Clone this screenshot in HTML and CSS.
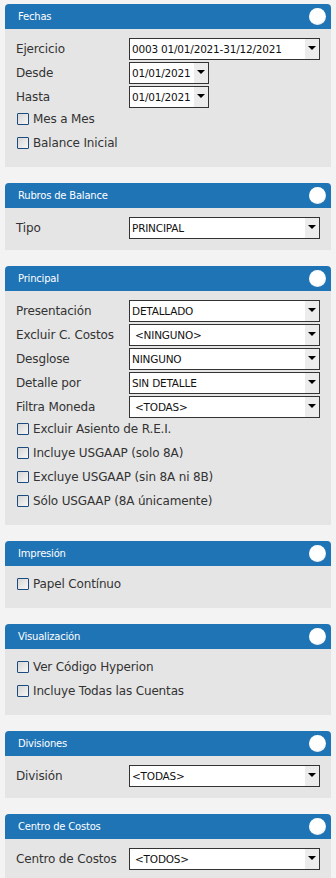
FILE: index.html
```html
<!DOCTYPE html>
<html lang="es">
<head>
  <meta charset="UTF-8">
  <title>Balance - Parámetros</title>
  <meta name="viewport" content="width=device-width, initial-scale=1.0">
  <link rel="stylesheet" href="styles.css">
</head>
<body>

  <!-- Fechas -->
  <div class="panel">
    <div class="panel-head"><span class="panel-title">Fechas</span><span class="toggle"></span></div>
    <div class="panel-body">
      <div class="field">
        <span class="field-label">Ejercicio</span>
        <div class="combo"><span class="combo-value">0003 01/01/2021-31/12/2021</span><span class="combo-btn"></span></div>
      </div>
      <div class="field">
        <span class="field-label">Desde</span>
        <div class="combo combo-date"><span class="combo-value">01/01/2021</span><span class="combo-btn"></span></div>
      </div>
      <div class="field">
        <span class="field-label">Hasta</span>
        <div class="combo combo-date"><span class="combo-value">01/01/2021</span><span class="combo-btn"></span></div>
      </div>
      <label class="check-row"><span class="check"></span>Mes a Mes</label>
      <label class="check-row"><span class="check"></span>Balance Inicial</label>
    </div>
  </div>

  <!-- Rubros de Balance -->
  <div class="panel">
    <div class="panel-head"><span class="panel-title">Rubros de Balance</span><span class="toggle"></span></div>
    <div class="panel-body">
      <div class="field">
        <span class="field-label">Tipo</span>
        <div class="combo"><span class="combo-value">PRINCIPAL</span><span class="combo-btn"></span></div>
      </div>
    </div>
  </div>

  <!-- Principal -->
  <div class="panel">
    <div class="panel-head"><span class="panel-title">Principal</span><span class="toggle"></span></div>
    <div class="panel-body">
      <div class="field">
        <span class="field-label">Presentación</span>
        <div class="combo"><span class="combo-value">DETALLADO</span><span class="combo-btn"></span></div>
      </div>
      <div class="field">
        <span class="field-label">Excluir C. Costos</span>
        <div class="combo"><span class="combo-value pad">&lt;NINGUNO&gt;</span><span class="combo-btn"></span></div>
      </div>
      <div class="field">
        <span class="field-label">Desglose</span>
        <div class="combo"><span class="combo-value">NINGUNO</span><span class="combo-btn"></span></div>
      </div>
      <div class="field">
        <span class="field-label">Detalle por</span>
        <div class="combo"><span class="combo-value">SIN DETALLE</span><span class="combo-btn"></span></div>
      </div>
      <div class="field">
        <span class="field-label">Filtra Moneda</span>
        <div class="combo"><span class="combo-value pad">&lt;TODAS&gt;</span><span class="combo-btn"></span></div>
      </div>
      <label class="check-row"><span class="check"></span>Excluir Asiento de R.E.I.</label>
      <label class="check-row"><span class="check"></span>Incluye USGAAP (solo 8A)</label>
      <label class="check-row"><span class="check"></span>Excluye USGAAP (sin 8A ni 8B)</label>
      <label class="check-row"><span class="check"></span>Sólo USGAAP (8A únicamente)</label>
    </div>
  </div>

  <!-- Impresión -->
  <div class="panel">
    <div class="panel-head"><span class="panel-title">Impresión</span><span class="toggle"></span></div>
    <div class="panel-body">
      <label class="check-row"><span class="check"></span>Papel Contínuo</label>
    </div>
  </div>

  <!-- Visualización -->
  <div class="panel">
    <div class="panel-head"><span class="panel-title">Visualización</span><span class="toggle"></span></div>
    <div class="panel-body">
      <label class="check-row"><span class="check"></span>Ver Código Hyperion</label>
      <label class="check-row"><span class="check"></span>Incluye Todas las Cuentas</label>
    </div>
  </div>

  <!-- Divisiones -->
  <div class="panel">
    <div class="panel-head"><span class="panel-title">Divisiones</span><span class="toggle"></span></div>
    <div class="panel-body">
      <div class="field">
        <span class="field-label">División</span>
        <div class="combo"><span class="combo-value">&lt;TODAS&gt;</span><span class="combo-btn"></span></div>
      </div>
    </div>
  </div>

  <!-- Centro de Costos -->
  <div class="panel">
    <div class="panel-head"><span class="panel-title">Centro de Costos</span><span class="toggle"></span></div>
    <div class="panel-body">
      <div class="field">
        <span class="field-label">Centro de Costos</span>
        <div class="combo"><span class="combo-value pad">&lt;TODOS&gt;</span><span class="combo-btn"></span></div>
      </div>
    </div>
  </div>

</body>
</html>
```

FILE: styles.css
```css
html, body {
  margin: 0;
  padding: 0;
  background: #f3f3f3;
  font-family: "DejaVu Sans", Verdana, sans-serif;
  color: #333;
}

body {
  padding-top: 4px;
}

.panel {
  margin: 0 5px 16px;
}

.panel-head {
  display: flex;
  align-items: center;
  justify-content: space-between;
  height: 25px;
  padding: 0 5px 0 13px;
  background: #1f74b6;
  border-radius: 4px 4px 0 0;
}

.panel-title {
  color: #fff;
  font-size: 10px;
  letter-spacing: -0.2px;
}

.toggle {
  width: 17px;
  height: 17px;
  border-radius: 50%;
  background: radial-gradient(circle at 42% 38%, #ffffff 58%, #e4e6ea 80%, #b9bec6 100%);
}

.panel-body {
  background: #e5e5e5;
  padding: 8px 11px 10px;
}

.field {
  display: flex;
  align-items: center;
  height: 24px;
}

.field-label {
  flex: none;
  width: 113px;
  font-size: 12px;
  letter-spacing: -0.15px;
  white-space: nowrap;
}

.combo {
  flex: 1;
  display: flex;
  height: 22px;
  box-sizing: border-box;
  border: 1px solid #333;
  background: #fff;
}

.combo-date {
  flex: none;
  width: 80px;
}

.combo-value {
  flex: 1;
  padding-left: 2px;
  font-size: 10.5px;
  letter-spacing: -0.2px;
  line-height: 20px;
  color: #111;
  white-space: nowrap;
  overflow: hidden;
}

.combo-value.pad {
  padding-left: 5px;
}

.combo-btn {
  flex: none;
  width: 14px;
  display: flex;
  align-items: center;
  justify-content: center;
  padding-bottom: 2px;
  box-sizing: border-box;
  background: #ececec;
}

.combo-btn::after {
  content: "";
  width: 0;
  height: 0;
  border-left: 4px solid transparent;
  border-right: 4px solid transparent;
  border-top: 4px solid #000;
}

.check-row {
  display: flex;
  align-items: center;
  height: 24px;
  padding-bottom: 5px;
  box-sizing: border-box;
  font-size: 12px;
  letter-spacing: -0.15px;
  white-space: nowrap;
}

.check {
  flex: none;
  width: 12px;
  height: 12px;
  margin: 0 4px 0 1px;
  border: 1px solid #1c4c7e;
  border-radius: 1px;
  box-sizing: border-box;
  background: linear-gradient(135deg, #d6d6d6, #f7f7f7);
}
```
